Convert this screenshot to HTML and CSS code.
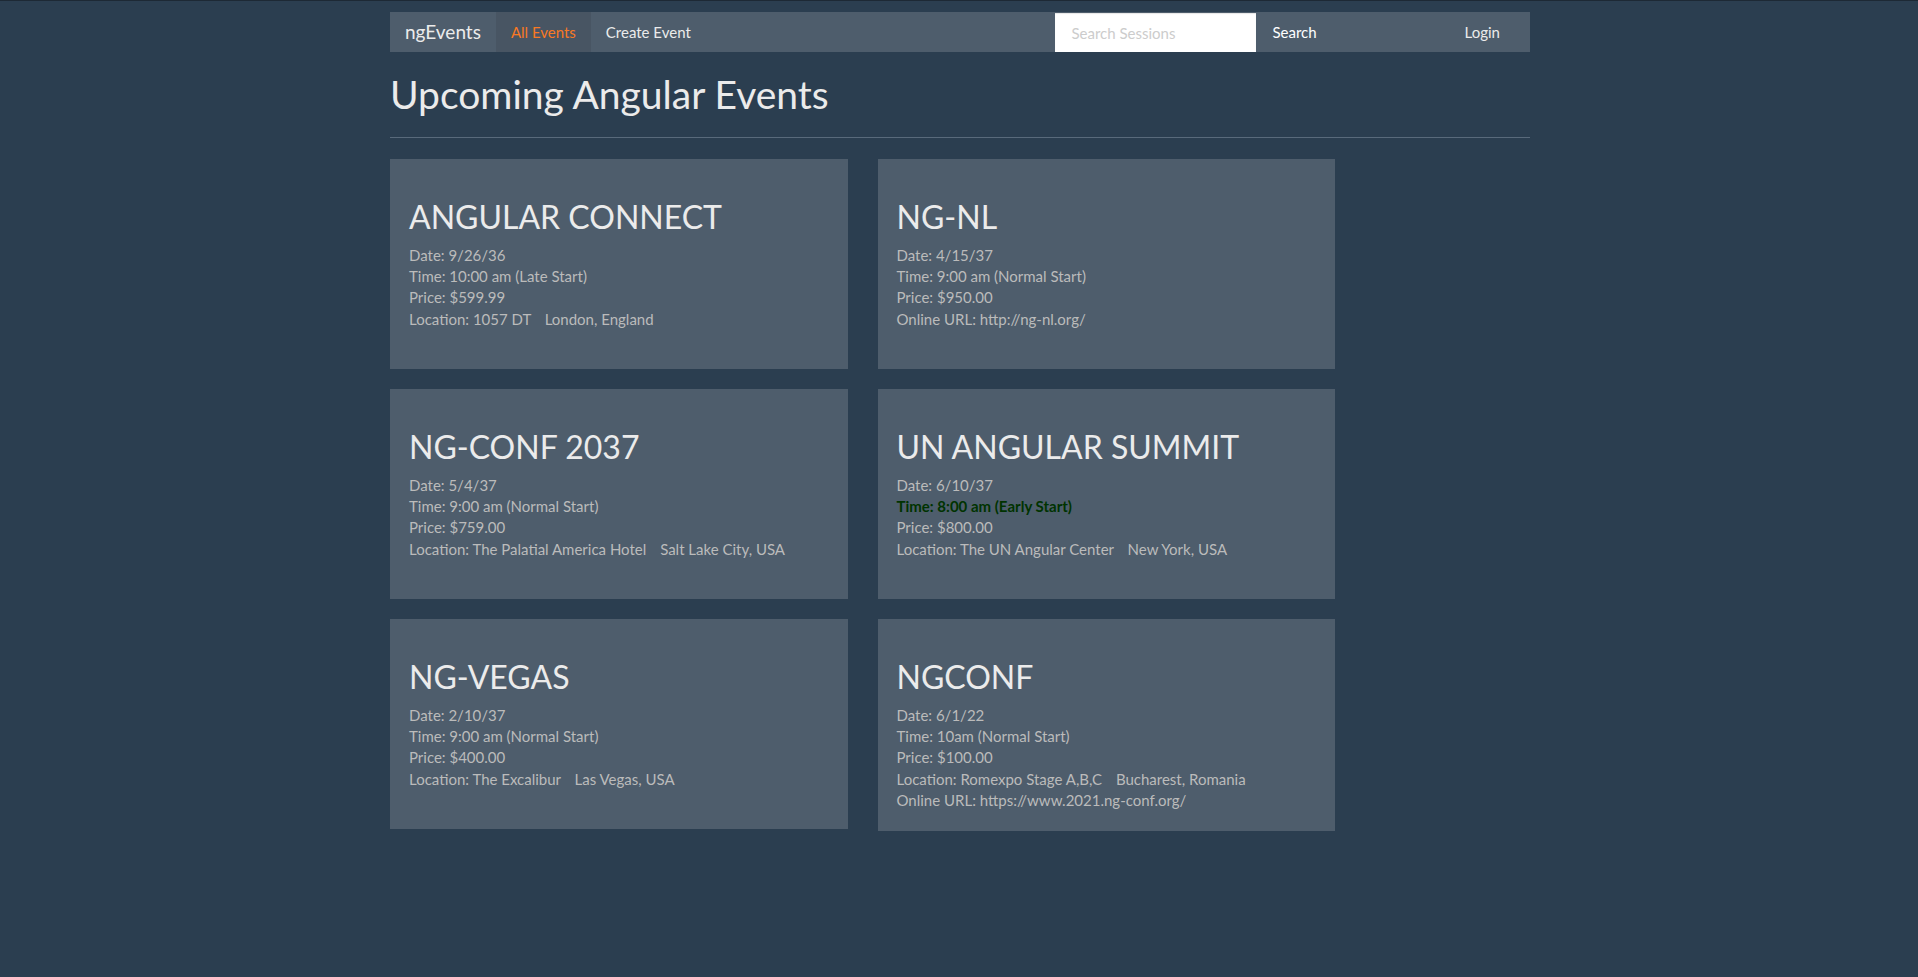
FILE: index.html
```html
<!DOCTYPE html>
<html lang="en">
<head>
<meta charset="utf-8">
<title>ngEvents</title>
<link rel="stylesheet" href="styles.css">
</head>
<body>
<div class="container">
  <nav class="navbar">
    <a class="brand" href="#">ngEvents</a>
    <ul class="nav-links">
      <li><a class="nav-link active" href="#">All Events</a></li>
      <li><a class="nav-link" href="#">Create Event</a></li>
    </ul>
    <form class="search-form">
      <input class="search-input" type="text" placeholder="Search Sessions">
      <button class="search-btn" type="button">Search</button>
    </form>
    <a class="nav-link login" href="#">Login</a>
  </nav>

  <h1 class="page-title">Upcoming Angular Events</h1>
  <hr class="divider">

  <div class="events">
    <div class="card">
      <h2 class="card-title">ANGULAR CONNECT</h2>
      <div class="detail">Date: 9/26/36</div>
      <div class="detail">Time: 10:00 am (Late Start)</div>
      <div class="detail">Price: $599.99</div>
      <div class="detail">Location: 1057 DT <span class="pad-left">London, England</span></div>
    </div>
    <div class="card">
      <h2 class="card-title">NG-NL</h2>
      <div class="detail">Date: 4/15/37</div>
      <div class="detail">Time: 9:00 am (Normal Start)</div>
      <div class="detail">Price: $950.00</div>
      <div class="detail">Online URL: http://ng-nl.org/</div>
    </div>
    <div class="card">
      <h2 class="card-title">NG-CONF 2037</h2>
      <div class="detail">Date: 5/4/37</div>
      <div class="detail">Time: 9:00 am (Normal Start)</div>
      <div class="detail">Price: $759.00</div>
      <div class="detail">Location: The Palatial America Hotel <span class="pad-left">Salt Lake City, USA</span></div>
    </div>
    <div class="card">
      <h2 class="card-title">UN ANGULAR SUMMIT</h2>
      <div class="detail">Date: 6/10/37</div>
      <div class="detail early">Time: 8:00 am (Early Start)</div>
      <div class="detail">Price: $800.00</div>
      <div class="detail">Location: The UN Angular Center <span class="pad-left">New York, USA</span></div>
    </div>
    <div class="card">
      <h2 class="card-title">NG-VEGAS</h2>
      <div class="detail">Date: 2/10/37</div>
      <div class="detail">Time: 9:00 am (Normal Start)</div>
      <div class="detail">Price: $400.00</div>
      <div class="detail">Location: The Excalibur <span class="pad-left">Las Vegas, USA</span></div>
    </div>
    <div class="card">
      <h2 class="card-title">NGCONF</h2>
      <div class="detail">Date: 6/1/22</div>
      <div class="detail">Time: 10am (Normal Start)</div>
      <div class="detail">Price: $100.00</div>
      <div class="detail">Location: Romexpo Stage A,B,C <span class="pad-left">Bucharest, Romania</span></div>
      <div class="detail">Online URL: https://www.2021.ng-conf.org/</div>
    </div>
  </div>
</div>
</body>
</html>
```

FILE: styles.css
```css
* { box-sizing: border-box; }

html, body { height: 100%; }

body {
  margin: 0;
  background: #2b3e50;
  color: #ebebeb;
  font-family: Lato, "Open Sans", "Liberation Sans", sans-serif;
  font-size: 15px;
  line-height: 1.428571;
  border-top: 1px solid #1d2935;
}

.container {
  width: 1140px;
  margin-left: calc(50% - 569px);
  padding-top: 11px;
}

/* Navbar */
.navbar {
  display: flex;
  align-items: stretch;
  height: 40px;
  background: #4e5d6c;
  padding-right: 15px;
}

.brand {
  display: block;
  padding: 10px 15px;
  font-size: 19px;
  line-height: 20px;
  color: #ebebeb;
  text-decoration: none;
}

.nav-links {
  display: flex;
  list-style: none;
  margin: 0;
  padding: 0;
}

.nav-link {
  display: block;
  padding: 10px 15px;
  font-size: 15px;
  line-height: 20px;
  color: #ebebeb;
  text-decoration: none;
}

.nav-link.active {
  color: #f97924;
  background: #485563;
}

.search-form {
  display: flex;
  margin: 0 117px 0 auto;
  padding-top: 1px;
}

.search-input {
  width: 201px;
  height: 39px;
  padding: 8px 16px;
  border: 0;
  border-radius: 0;
  background: #fff;
  color: #2b3e50;
  box-shadow: inset 0 1px 1px rgba(0, 0, 0, 0.1);
  font-family: inherit;
  font-size: 15px;
  outline: none;
}

.search-input::placeholder { color: #cccccc; }

.search-btn {
  height: 39px;
  padding: 8px 16px;
  border: 0;
  background: #4e5d6c;
  color: #ffffff;
  font-family: inherit;
  font-size: 15px;
  line-height: 21px;
}

/* Heading */
.page-title {
  margin: 21px 0 0;
  font-size: 39px;
  line-height: 1.1;
  font-weight: 400;
  color: #ebebeb;
}

.divider {
  margin: 21px 0 21px;
  border: 0;
  border-top: 1px solid #596a7b;
}

/* Event cards */
.events {
  display: grid;
  grid-template-columns: 457.5px 457.5px;
  column-gap: 30px;
  row-gap: 20px;
  align-items: start;
}

.card {
  background: #4e5d6c;
  padding: 19px;
  min-height: 210px;
}

.card-title {
  margin: 21px 0 10.5px;
  font-size: 32px;
  line-height: 1.1;
  font-weight: 400;
  color: #ebebeb;
}

.detail { color: #bbbbbb; }

.detail.early {
  color: #003300;
  font-weight: bold;
}

.pad-left { margin-left: 10px; }
```
